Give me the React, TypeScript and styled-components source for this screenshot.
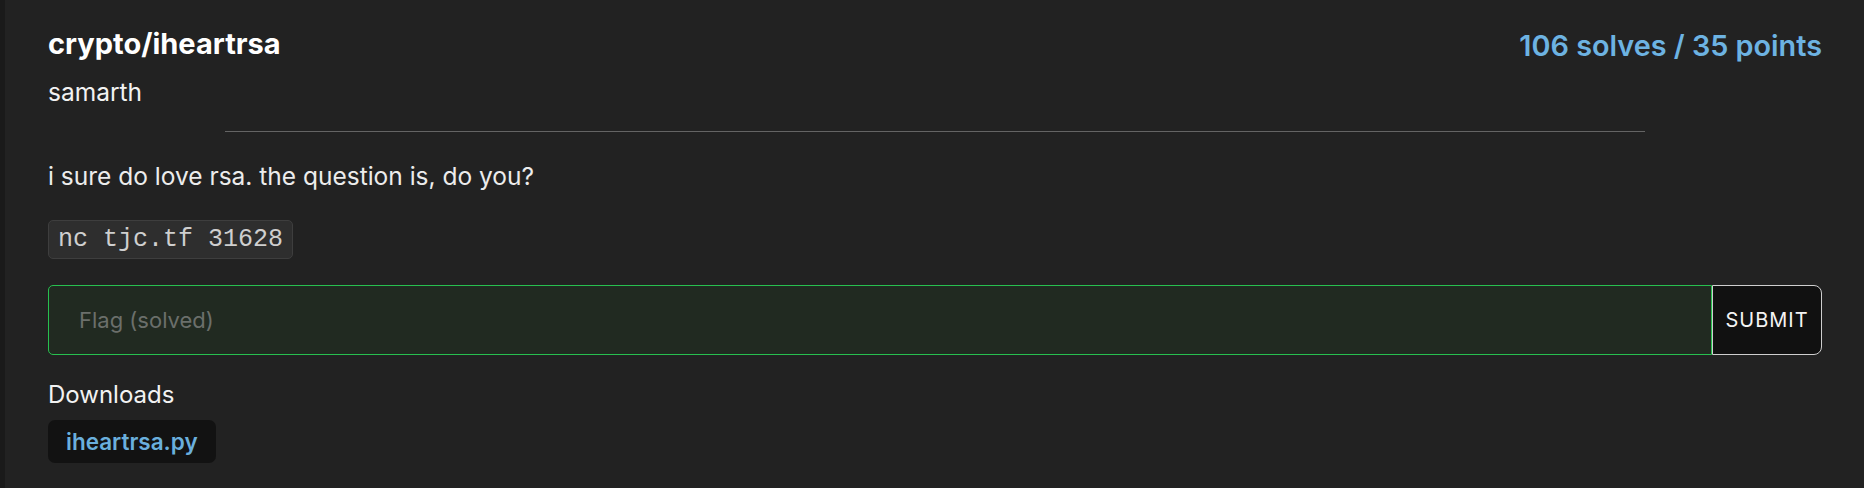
import styled, { createGlobalStyle } from "styled-components";

const GlobalStyle = createGlobalStyle`
  body {
    margin: 0;
    background: #222222;
    color: #f2f2f2;
    font-family: "Inter", "Noto Sans", sans-serif;
  }
`;

const Page = styled.div`
  display: flex;
  min-height: 488px;
  background: #222222;
`;

const Rail = styled.div`
  width: 5px;
  flex-shrink: 0;
  background: #1a1a1a;
`;

const Card = styled.div`
  flex: 1;
  padding: 26px 42px 0 43px;
`;

const Header = styled.div`
  display: flex;
  justify-content: space-between;
  align-items: flex-start;
`;

const Title = styled.h1`
  margin: 0;
  font-size: 29px;
  line-height: 35px;
  font-weight: 700;
  color: #ffffff;
`;

const Author = styled.div`
  margin-top: 16px;
  font-size: 24.5px;
  line-height: 30px;
  color: #f2f2f2;
`;

const Stats = styled.div`
  margin-top: 3px;
  font-size: 28.8px;
  line-height: 34px;
  font-weight: 600;
  color: #6db3e2;
`;

const Divider = styled.hr`
  width: 80%;
  margin: 24px auto 0;
  border: none;
  border-top: 1px solid #646464;
`;

const Description = styled.p`
  margin: 29px 0 0;
  font-size: 24.5px;
  line-height: 30px;
  color: #ececec;
`;

const Code = styled.code`
  display: inline-block;
  margin-top: 29px;
  padding: 0 9px;
  font-family: "Liberation Mono", "DejaVu Sans Mono", monospace;
  font-size: 25px;
  line-height: 37px;
  color: #cfcfcf;
  background: #2e2e2e;
  border: 1px solid #3e3e3e;
  border-radius: 5px;
`;

const FlagForm = styled.form`
  display: flex;
  margin-top: 26px;
  height: 70px;
`;

const FlagInput = styled.input`
  flex: 1;
  min-width: 0;
  box-sizing: border-box;
  height: 100%;
  padding: 0 30px;
  font-family: inherit;
  font-size: 22px;
  color: #e0e0e0;
  background: #212a21;
  border: 1px solid #27c04f;
  border-radius: 5px 0 0 5px;
  outline: none;

  &::placeholder {
    color: #6b6f6b;
  }
`;

const SubmitButton = styled.button`
  box-sizing: border-box;
  width: 110px;
  height: 100%;
  padding: 0;
  font-family: inherit;
  font-size: 20px;
  letter-spacing: 1px;
  color: #f4f4f4;
  background: #111111;
  border: 1px solid #cfcfcf;
  border-radius: 0 8px 8px 0;
`;

const SectionLabel = styled.div`
  margin-top: 25px;
  font-size: 24px;
  line-height: 30px;
  color: #f2f2f2;
`;

const FileChip = styled.a`
  display: inline-block;
  margin-top: 10px;
  padding: 0 18px;
  font-size: 22.5px;
  line-height: 43px;
  font-weight: 600;
  color: #6aafdd;
  background: #121212;
  border-radius: 7px;
  text-decoration: none;
`;

const App = () => {
  return (
    <Page>
      <GlobalStyle />
      <Rail />
      <Card>
        <Header>
          <div>
            <Title>crypto/iheartrsa</Title>
            <Author>samarth</Author>
          </div>
          <Stats>106 solves / 35 points</Stats>
        </Header>
        <Divider />
        <Description>i sure do love rsa. the question is, do you?</Description>
        <Code>nc tjc.tf 31628</Code>
        <FlagForm onSubmit={(e) => e.preventDefault()}>
          <FlagInput placeholder="Flag (solved)" />
          <SubmitButton type="submit">SUBMIT</SubmitButton>
        </FlagForm>
        <SectionLabel>Downloads</SectionLabel>
        <div>
          <FileChip href="#">iheartrsa.py</FileChip>
        </div>
      </Card>
    </Page>
  );
};

export default App;
